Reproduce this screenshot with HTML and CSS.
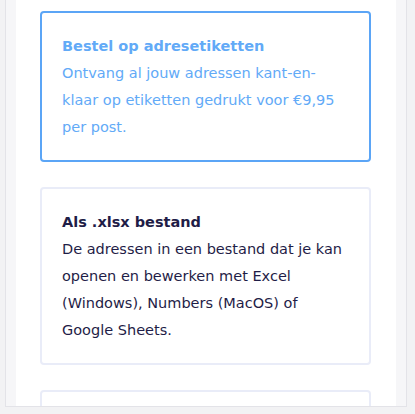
FILE: index.html
```html
<!DOCTYPE html>
<html lang="nl">
<head>
    <meta charset="UTF-8">
    <meta name="viewport" content="width=device-width, initial-scale=1.0">
    <title>Adressen ontvangen</title>
    <link rel="stylesheet" href="styles.css">
</head>
<body>

<div class="panel">
  <div class="panelInner">
    <div class="option selected">
      <div class="optionTitle">Bestel op adresetiketten</div>
      <div class="optionText">Ontvang al jouw adressen kant-en-klaar op etiketten gedrukt voor €9,95 per post.</div>
    </div>

    <div class="option">
      <div class="optionTitle">Als .xlsx bestand</div>
      <div class="optionText">De adressen in een bestand dat je kan openen en bewerken met Excel (Windows), Numbers (MacOS) of Google Sheets.</div>
    </div>

    <div class="option">
      <div class="optionTitle">&nbsp;</div>
      <div class="optionText">&nbsp;</div>
    </div>
  </div>
</div>

</body>
</html>
```

FILE: styles.css
```css
html, body {
    margin: 0;
    padding: 0;
}

body {
    font-family: "DejaVu Sans", "Noto Sans", sans-serif;
    background-color: #f2f2f4;
    color: #1f1d47;
}

.panel {
    margin-left: 5px;
    width: 402px;
    height: 407px;
    box-sizing: border-box;
    border: 1px solid #e3e3e8;
    border-top: none;
    background-color: #f6f6f8;
    padding: 0 10px;
    overflow: hidden;
}

.panelInner {
    background-color: #ffffff;
    height: 100%;
    padding: 11px 25px 0 24px;
    box-sizing: border-box;
}

.option {
    border: 2px solid #e9ecf8;
    border-radius: 4px;
    padding: 19.5px 20px;
    margin-bottom: 25px;
    font-size: 14.5px;
    line-height: 27px;
}

.option.selected {
    border-color: #5ba5f6;
    color: #62aaf7;
}

.optionTitle {
    font-weight: bold;
}
```
